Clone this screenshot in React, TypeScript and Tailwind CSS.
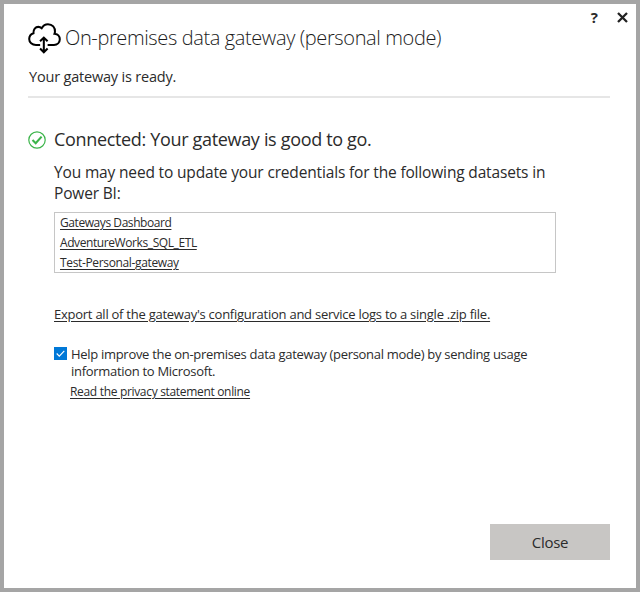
import React from "react";

const datasets = [
  { name: "Gateways Dashboard", spacing: "tracking-[-0.43px]" },
  { name: "AdventureWorks_SQL_ETL", spacing: "tracking-[-0.41px]" },
  { name: "Test-Personal-gateway", spacing: "tracking-[-0.35px]" },
];

function CloudIcon() {
  return (
    <svg width="33" height="31" viewBox="0 0 34 32" fill="none" stroke="#000" strokeWidth="2.1">
      <path d="M12.5 22.7H8.2C4.2 22.7 1.2 20 1.2 16.5c0-3 1.8-5.2 4.4-6C5.2 6.6 7.8 4 10.6 4c1.4 0 2.5.4 3.5 1.3C15.7 2.5 18 1.2 20.6 1.2c4.5 0 7.6 3.6 7.2 8 -.1.9-.3 1.4-.5 2 3.3.2 5.5 2.6 5.5 5.7 0 3.3-2.6 5.8-6 5.8H20.2" />
      <path d="M16.3 15.6v14M12.4 18.9l3.9-3.8 3.9 3.8M12.4 26.4l3.9 3.8 3.9-3.8" />
    </svg>
  );
}

function ConnectedIcon() {
  return (
    <svg width="18" height="18" viewBox="0 0 18 18" fill="none" stroke="#3bb44a">
      <circle cx="9" cy="9" r="8.2" strokeWidth="1.2" />
      <path d="M4.5 9.1l3.2 3.2 5.9-6.7" strokeWidth="2.1" />
    </svg>
  );
}

export default function App() {
  return (
    <div className="flex h-[592px] w-[640px] flex-col border-4 border-[#a5a5a5] bg-white font-['Open_Sans','Noto_Sans',sans-serif] whitespace-nowrap text-[#2b2b2b]">
      <header className="ml-6 mr-[26px] h-[94px] border-b-2 border-[#e6e6e6]">
        <div className="-mr-[18px] flex h-[52px] items-start">
          <div className="mt-[19px] shrink-0">
            <CloudIcon />
          </div>
          <h1 className="ml-1 mt-5 text-[20px] leading-[28px] font-light tracking-[-0.38px] text-[#1c1c1c]">
            On-premises data gateway (personal mode)
          </h1>
          <div className="ml-auto mt-1 flex items-center gap-[19px]">
            <button className="text-[15px] leading-[18px] font-bold">?</button>
            <button aria-label="Close window">
              <svg width="11" height="11" viewBox="0 0 11 11" stroke="#222" strokeWidth="2.3">
                <path d="M1 1l9 9M10 1l-9 9" />
              </svg>
            </button>
          </div>
        </div>
        <p className="ml-px mt-[11px] text-[14.5px] leading-5 tracking-[-0.19px]">Your gateway is ready.</p>
      </header>

      <main className="ml-[50px] mt-[30px] flex flex-col items-start">
        <div className="-ml-[26px] flex h-[23px] items-center gap-2">
          <ConnectedIcon />
          <h2 className="text-[18px] leading-[23px] tracking-[-0.33px]">Connected: Your gateway is good to go.</h2>
        </div>
        <div className="mt-[11px] text-[15.5px] leading-[21px] tracking-[-0.16px]">
          <p>You may need to update your credentials for the following datasets in</p>
          <p>Power BI:</p>
        </div>
        <ul className="mt-2 h-[61px] w-[502px] border border-[#c6c6c6] pl-[5px] text-[12px] leading-5">
          {datasets.map((d) => (
            <li key={d.name}>
              <a className={`underline underline-offset-2 ${d.spacing}`}>{d.name}</a>
            </li>
          ))}
        </ul>
        <a className="mt-[31px] text-[13px] leading-5 tracking-[-0.25px] underline underline-offset-2">
          Export all of the gateway's configuration and service logs to a single .zip file.
        </a>
        <div className="mt-[22px] flex gap-1">
          <span className="mt-px flex size-[13px] items-center justify-center bg-[#0078d7]">
            <svg width="13" height="13" viewBox="0 0 13 13" fill="none" stroke="#fff" strokeWidth="1.1">
              <path d="M2.7 6.5l2.6 2.6 5-5.2" />
            </svg>
          </span>
          <div className="text-[13px] leading-[17px] tracking-[-0.3px]">
            <p>Help improve the on-premises data gateway (personal mode) by sending usage</p>
            <p>information to Microsoft.</p>
          </div>
        </div>
        <a className="ml-4 mt-[2px] text-[12px] leading-5 tracking-[-0.32px] underline underline-offset-2">
          Read the privacy statement online
        </a>
      </main>

      <footer className="mt-auto mr-[26px] mb-7 flex justify-end">
        <button className="h-9 w-[120px] bg-[#c8c6c4] pt-px text-[15px] tracking-[-0.3px]">Close</button>
      </footer>
    </div>
  );
}
